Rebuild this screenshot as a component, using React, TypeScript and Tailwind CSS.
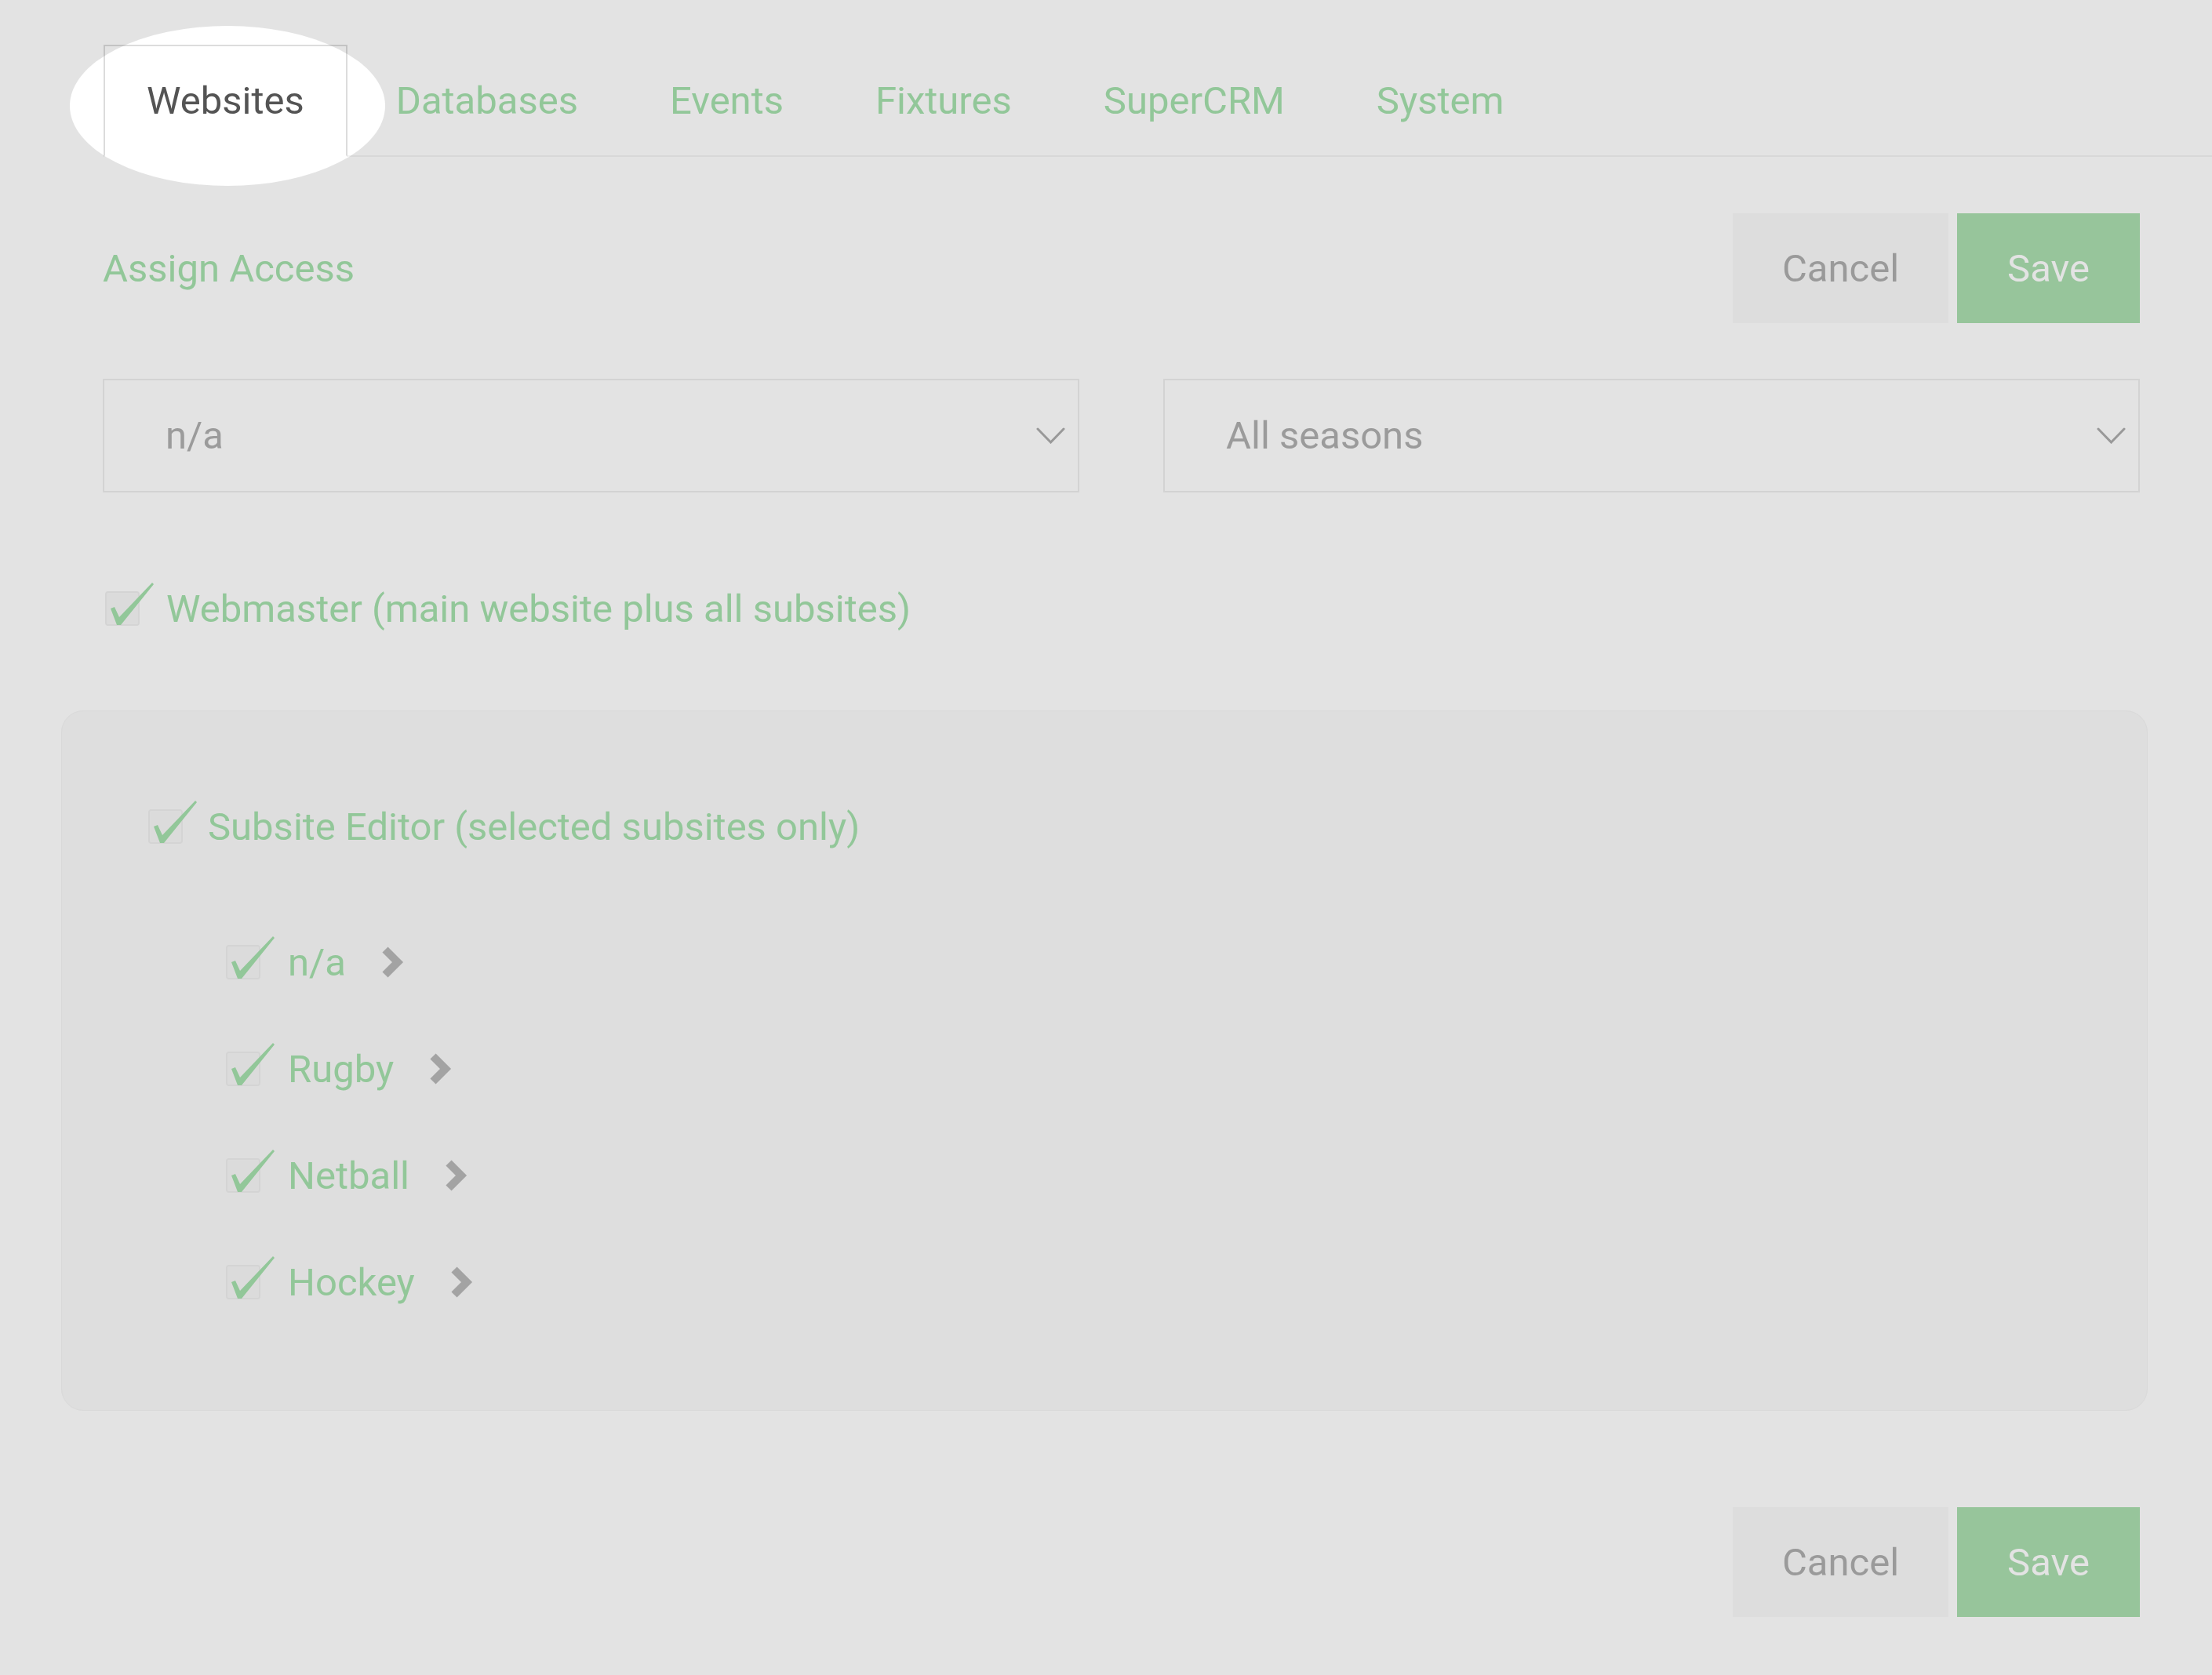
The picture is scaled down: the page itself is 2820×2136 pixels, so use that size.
import React from "react";

const tabs = ["Websites", "Databases", "Events", "Fixtures", "SuperCRM", "System"];
const subsites = ["n/a", "Rugby", "Netball", "Hockey"];

// green tick sitting over a faint square checkbox
function Tick() {
    return (
        <span className="relative block h-[44px] w-[44px] shrink-0 rounded-[4px] border-2 border-[#efefef] bg-[#f7f7f7]">
            <svg viewBox="0 0 62 56" className="absolute left-[0px] top-[-13px] h-[56px] w-[62px] overflow-visible">
                <path d="M5 33 L10 31 L16 44 L58 0 L60 2 L18 54 L13 54 Z" fill="#a5e0ac" />
            </svg>
        </span>
    );
}

function ChevronRight() {
    return (
        <svg viewBox="0 0 30 42" className="h-[42px] w-[30px] shrink-0">
            <polyline points="6,5 22,21 6,37" fill="none" stroke="#b8b8b8" strokeWidth="10" />
        </svg>
    );
}

function Select({ value }: { value: string }) {
    return (
        <div className="flex h-[145px] items-center justify-between border-2 border-[#eeeeee] bg-white pl-[78px] pr-[16px]">
            <span className="text-[#afafaf]">{value}</span>
            <svg viewBox="0 0 37 21" className="h-[21px] w-[37px]">
                <polyline points="2,2 18.5,19 35,2" fill="none" stroke="#acacac" strokeWidth="3" strokeLinecap="round" />
            </svg>
        </div>
    );
}

function Buttons() {
    return (
        <div className="flex gap-[11px]">
            <button className="h-[140px] w-[275px] bg-[#f9f9f9] text-[#aeaeae]">Cancel</button>
            <button className="h-[140px] w-[233px] bg-[#aadeaf] text-white">Save</button>
        </div>
    );
}

export default function App() {
    return (
        <div className="relative min-h-[2136px] w-full overflow-hidden bg-white font-['Roboto',sans-serif] text-[49px] leading-none">
            <div className="pl-[131px] pr-[92px]">
                {/* tabs */}
                <ul className="-mr-[92px] ml-[1px] mt-[57px] flex border-b-2 border-[#f3f3f3]">
                    {tabs.map((tab, idx) => (
                        <li
                            key={tab}
                            className={
                                idx === 0
                                    ? "-mb-[2px] mr-[7px] flex h-[143px] items-center border-2 border-[#dcdcdc] border-b-white bg-white px-[53px] text-[#545454]"
                                    : "-mb-[2px] mr-[7px] flex h-[143px] items-center border-2 border-transparent px-[53px] text-[#a5e0ac]"
                            }
                        >
                            {tab}
                        </li>
                    ))}
                </ul>

                <div className="mt-[72px] flex h-[140px] items-center justify-between">
                    <h2 className="text-[#a5e0ac]">Assign Access</h2>
                    <Buttons />
                </div>

                <div className="mt-[71px] grid grid-cols-2 gap-[107px]">
                    <Select value="n/a" />
                    <Select value="All seasons" />
                </div>

                <label className="ml-[3px] mt-[118px] flex h-[60px] items-center gap-[34px] text-[#a5e0ac]">
                    <Tick />
                    Webmaster (main website plus all subsites)
                </label>

                <div className="-ml-[53px] -mr-[10px] mt-[100px] rounded-[28px] border border-[#f4f4f4] bg-[#fafafa] pb-[133px] pl-[110px] pt-[117px]">
                    <label className="flex h-[60px] items-center gap-[32px] text-[#a5e0ac]">
                        <Tick />
                        Subsite Editor (selected subsites only)
                    </label>
                    <div className="ml-[99px] mt-[113px] flex flex-col gap-[76px]">
                        {subsites.map((name) => (
                            <div key={name} className="flex h-[60px] items-center">
                                <Tick />
                                <span className="ml-[35px] text-[#a5e0ac]">{name}</span>
                                <span className="ml-[44px]">
                                    <ChevronRight />
                                </span>
                            </div>
                        ))}
                    </div>
                </div>

                <div className="mt-[123px] flex justify-end">
                    <Buttons />
                </div>
            </div>

            {/* dimmed backdrop with an elliptical spotlight on the active tab */}
            <div className="pointer-events-none absolute left-[89px] top-[33px] h-[204px] w-[402px] rounded-[50%] shadow-[0_0_0_4000px_rgba(0,0,0,0.11)]" />
        </div>
    );
}
